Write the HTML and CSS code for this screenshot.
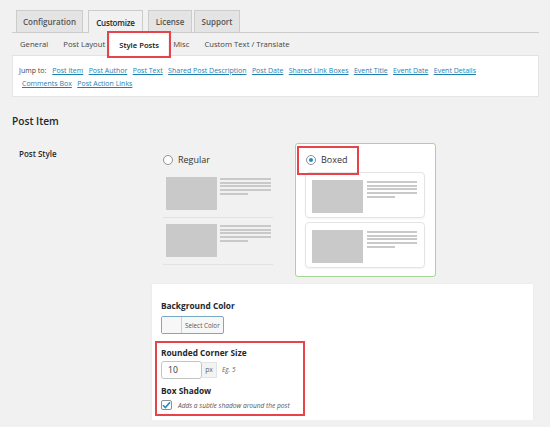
FILE: index.html
```html
<!DOCTYPE html>
<html>
<head>
<meta charset="utf-8">
<link rel="stylesheet" href="styles.css">
</head>
<body>
<div class="wrap">
  <div class="tabs">
    <div class="tab t1">Configuration</div>
    <div class="tab t2 active">Customize</div>
    <div class="tab t3">License</div>
    <div class="tab t4">Support</div>
  </div>
  <div class="subnav">
    <div class="sub">General</div>
    <div class="sub">Post Layout</div>
    <div class="sub current"><span>Style Posts</span></div>
    <div class="sub">Misc</div>
    <div class="sub">Custom Text / Translate</div>
  </div>
  <div class="jump">
    <div class="jrow"><span class="jl">Jump to:</span><a>Post Item</a><a>Post Author</a><a>Post Text</a><a>Shared Post Description</a><a>Post Date</a><a>Shared Link Boxes</a><a>Event Title</a><a>Event Date</a><a>Event Details</a></div>
    <div class="jrow second"><a>Comments Box</a><a>Post Action Links</a></div>
  </div>
  <h2 class="section">Post Item</h2>
  <div class="row">
    <div class="label">Post Style</div>
    <div class="field">
      <div class="options">
        <div class="opt regular">
          <div class="radio-row"><span class="radio"></span><span class="rtext">Regular</span></div>
          <div class="ritem">
            <div class="thumb"></div>
            <div class="lines"><i></i><i></i><i></i><i></i><i class="short"></i></div>
          </div>
          <div class="ritem">
            <div class="thumb"></div>
            <div class="lines"><i></i><i></i><i></i><i></i><i class="short"></i></div>
          </div>
        </div>
        <div class="opt boxed">
          <div class="radio-row hl"><span class="radio on"></span><span class="rtext">Boxed</span></div>
          <div class="bitem">
            <div class="thumb"></div>
            <div class="lines"><i></i><i></i><i></i><i></i><i class="short"></i></div>
          </div>
          <div class="bitem">
            <div class="thumb"></div>
            <div class="lines"><i></i><i></i><i></i><i></i><i class="short"></i></div>
          </div>
        </div>
      </div>
      <div class="panel">
        <div class="flabel">Background Color</div>
        <div class="colorbtn"><span class="swatch"></span><span class="ctext">Select Color</span></div>
        <div class="hlbox">
          <div class="flabel">Rounded Corner Size</div>
          <div class="numrow">
            <span class="num">10</span><span class="px">px</span><span class="eg">Eg. 5</span>
          </div>
          <div class="flabel shadow">Box Shadow</div>
          <div class="checkrow">
            <span class="check"><svg width="9" height="8" viewBox="0 0 9 8"><path d="M1 4.2 L3.4 6.6 L8 1.2" fill="none" stroke="#1e8cbe" stroke-width="1.6"/></svg></span>
            <span class="desc">Adds a subtle shadow around the post</span>
          </div>
        </div>
      </div>
    </div>
  </div>
</div>
</body>
</html>
```

FILE: styles.css
```css
* { box-sizing: border-box; }
body {
  margin: 0;
  background: #f1f1f1;
  font-family: "Open Sans", "Noto Sans", sans-serif;
  color: #23282d;
}
.wrap { padding: 10px 11px 0 12px; }

.tabs {
  display: flex;
  gap: 5px;
  padding-left: 4px;
  border-bottom: 1px solid #ccc;
  height: 23px;
}
.tab {
  height: 22px;
  border: 1px solid #ccc;
  border-bottom: none;
  background: #e4e4e4;
  font-size: 8px;
  font-weight: 600;
  color: #555;
  display: flex;
  align-items: center;
  justify-content: center;
  white-space: nowrap;
}
.t1 { width: 67px; }
.t2 { width: 55px; }
.t3 { width: 44px; }
.t4 { width: 46px; margin-left: -3px; }
.tab.active {
  background: #f1f1f1;
  color: #23282d;
  height: 23px;
  margin-bottom: -1px;
  letter-spacing: -0.2px;
}

.subnav {
  display: flex;
  height: 23px;
  padding-left: 8px;
  border-bottom: 1px solid #e2e2e2;
  font-size: 7.7px;
  color: #444;
}
.sub {
  display: flex;
  align-items: center;
  margin-right: 15px;
}
.sub.current {
  position: relative;
  margin-left: -10px;
  margin-right: 5px;
  width: 58px;
  justify-content: center;
  background: #fff;
  color: #111;
  font-weight: 600;
  height: 24px;
}
.sub.current::after {
  content: "";
  position: absolute;
  left: -3px; right: -3px; top: -2px; bottom: -1px;
  border: 2px solid #e8434a;
}

.jump {
  background: #fff;
  border: 1px solid #e5e5e5;
  border-top: none;
  height: 41px;
  padding: 8px 6px 0 6px;
  font-size: 7px;
  line-height: 13px;
}
.jrow { display: flex; white-space: nowrap; }
.jrow.second { padding-left: 3px; }
.jl { color: #444; margin-right: 6px; }
.jump a {
  color: #1e7fb3;
  text-decoration: underline;
  margin-right: 5.4px;
}

.section {
  margin: 16px 0 0 0;
  font-size: 10.2px;
  font-weight: 600;
  height: 16px;
  line-height: 16px;
}
.row {
  display: grid;
  grid-template-columns: 140px 1fr;
  margin-top: 14px;
}
.label {
  padding: 5px 0 0 7px;
  font-size: 8px;
  font-weight: 600;
}
.options {
  display: flex;
  gap: 22px;
  padding-left: 11px;
  align-items: flex-start;
}
.opt.regular { width: 110px; padding-top: 12px; }
.radio-row {
  display: flex;
  align-items: center;
  height: 10px;
  gap: 5px;
}
.radio {
  width: 10px; height: 10px;
  border-radius: 50%;
  border: 1px solid #8c8f94;
  background: #fff;
  position: relative;
  flex: none;
}
.radio.on::after {
  content: "";
  position: absolute;
  left: 2px; top: 2px;
  width: 4px; height: 4px;
  border-radius: 50%;
  background: #1e8cbe;
}
.rtext { font-size: 9px; color: #333; line-height: 10px; }
.ritem {
  display: flex;
  gap: 3px;
  padding: 0 1px 7px 3px;
  border-bottom: 1px solid #e2e2e2;
  margin-top: 6px;
}
.regular .radio-row + .ritem { margin-top: 12px; }
.thumb {
  width: 51px;
  height: 33px;
  background: #c9c9c9;
  flex: none;
}
.lines {
  width: 51px;
  display: flex;
  flex-direction: column;
  gap: 1.7px;
  padding-top: 1px;
}
.lines i {
  display: block;
  height: 2px;
  background: #c9c9c9;
}
.lines i.short { width: 28px; }

.opt.boxed {
  width: 141px;
  height: 134px;
  background: #fff;
  border: 1px solid #a5d692;
  border-radius: 3px;
  padding: 11px 10px 0 9px;
}
.radio-row.hl {
  position: relative;
  padding-left: 1px;
}
.radio-row.hl::after {
  content: "";
  position: absolute;
  left: -8px; top: -9px;
  width: 58px; height: 25px;
  border: 2px solid #e8434a;
}
.bitem {
  display: flex;
  gap: 4px;
  width: 120px;
  height: 46px;
  border: 1px solid #e4e4e4;
  border-radius: 4px;
  padding: 7px 0 0 6px;
  margin-top: 7px;
  box-shadow: 0 1px 2px rgba(0,0,0,0.05);
}
.bitem + .bitem { margin-top: 4px; }
.bitem .lines { width: 50px; }

.panel {
  margin-top: 7px;
  width: 381px;
  height: 136px;
  background: #fff;
  padding: 16px 0 0 9px;
  box-shadow: 0 0 2px rgba(0,0,0,0.06);
}
.flabel {
  font-size: 8.3px;
  font-weight: 700;
  color: #23282d;
  line-height: 11px;
}
.colorbtn {
  margin-top: 5px;
  display: flex;
  width: 63px;
  height: 18px;
  border: 1px solid #7aa9c4;
  border-radius: 2px;
  background: #f7f7f7;
}
.swatch { width: 20px; border-right: 1px solid #d0d0d0; background: #f7f7f7; }
.ctext {
  font-size: 6.3px;
  color: #555;
  display: flex;
  align-items: center;
  padding-left: 3px;
}
.hlbox {
  margin: 7px 0 0 -6px;
  width: 150px;
  height: 75px;
  border: 2px solid #e8434a;
  padding: 4px 0 0 4px;
}
.numrow {
  margin-top: 2px;
  display: flex;
  align-items: center;
  height: 19px;
}
.num {
  width: 41px; height: 18px;
  border: 1px solid #c4c4c4;
  border-radius: 3px;
  font-size: 8.6px;
  color: #333;
  padding-left: 6px;
  display: flex;
  align-items: center;
}
.px {
  width: 15px; height: 16px;
  background: #f3f3f3;
  border: 1px solid #e3e3e3;
  border-left: none;
  font-size: 6.8px;
  color: #666;
  display: flex;
  align-items: center;
  justify-content: center;
}
.eg {
  margin-left: 5px;
  font-size: 6.4px;
  font-style: italic;
  color: #666;
}
.flabel.shadow { margin-top: 6px; }
.checkrow {
  display: flex;
  align-items: center;
  gap: 6px;
  margin-top: 4px;
}
.check {
  width: 11px; height: 10px;
  border: 1px solid #8c8f94;
  border-radius: 2px;
  display: flex;
  align-items: center;
  justify-content: center;
  background: #fff;
}
.desc {
  font-size: 6.6px;
  font-style: italic;
  color: #555;
}
```
